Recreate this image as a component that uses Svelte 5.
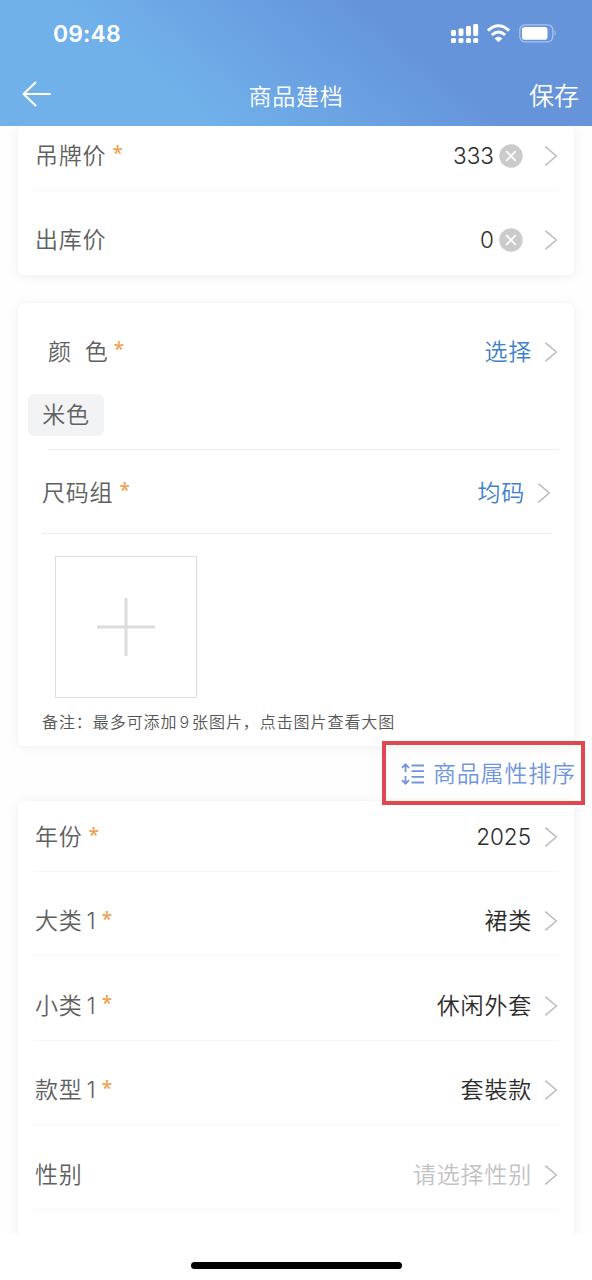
<script lang="ts">
  type Row = {
    label: string;
    index?: string;
    value: string;
    required?: boolean;
    clearable?: boolean;
    placeholder?: boolean;
  };

  const prices: Row[] = [
    { label: '吊牌价', value: '333', required: true, clearable: true },
    { label: '出库价', value: '0', clearable: true },
  ];

  const attributes: Row[] = [
    { label: '年份', value: '2025', required: true },
    { label: '大类', index: '1', value: '裙类', required: true },
    { label: '小类', index: '1', value: '休闲外套', required: true },
    { label: '款型', index: '1', value: '套裝款', required: true },
    { label: '性别', value: '请选择性别', placeholder: true },
  ];
</script>

{#snippet chevron()}
  <svg class="chevron" width="14" height="22" viewBox="0 0 14 22" fill="none">
    <path d="M1.3 1.6L12.3 11L1.3 20.4" stroke="#bcbcbc" stroke-width="1.5"/>
  </svg>
{/snippet}

{#snippet clearIcon()}
  <svg class="clear" width="24" height="24" viewBox="0 0 24 24">
    <circle cx="12" cy="12" r="11.7" fill="#cbcbcb"/>
    <path d="M7.2 7.2L16.8 16.8M16.8 7.2L7.2 16.8" stroke="#fff" stroke-width="1.7"/>
  </svg>
{/snippet}

{#snippet fieldRow(row: Row)}
  <div class="row">
    <span class="label spaced">
      {row.label}{#if row.index}<span class="index">{row.index}</span>{/if}{#if row.required}<i class="star">*</i>{/if}
    </span>
    <span
      class="value"
      class:placeholder={row.placeholder}
      class:clearable={row.clearable}
      class:number={/^\d+$/.test(row.value)}
    >{row.value}</span>
    {#if row.clearable}{@render clearIcon()}{/if}
    {@render chevron()}
  </div>
{/snippet}

<div class="screen">
  <header>
    <div class="status">
      <span class="time">09:48</span>
      <svg width="108" height="24" viewBox="0 0 108 24" fill="#fff">
        <rect x="1" y="8" width="5" height="6" rx="1.4"/>
        <rect x="8.5" y="6.5" width="5" height="7.5" rx="1.4"/>
        <rect x="16" y="4" width="5" height="10" rx="1.4"/>
        <rect x="23.2" y="2" width="5" height="12" rx="1.4"/>
        <rect x="1" y="16" width="5" height="5" rx="1.6"/>
        <rect x="8.5" y="16" width="5" height="5" rx="1.6"/>
        <rect x="16" y="16" width="5" height="5" rx="1.6"/>
        <rect x="23.2" y="16" width="5" height="5" rx="1.6"/>
        <g fill="none" stroke="#fff" stroke-width="3">
          <path d="M38 8.6Q48.5 -1 59 8.6"/>
          <path d="M41.8 13Q48.5 7 55.2 13"/>
        </g>
        <path d="M44.6 16.4Q48.5 13 52.4 16.4L48.5 20.2Z"/>
        <rect x="69.8" y="2.8" width="33" height="17" rx="5" fill="none" stroke="#fff" stroke-opacity=".45" stroke-width="1.3"/>
        <rect x="72" y="5" width="25.5" height="12.7" rx="2.8"/>
        <path d="M104.6 8.5Q107 11.2 104.6 14Z" fill-opacity=".5"/>
      </svg>
    </div>
    <div class="nav">
      <svg class="back" width="30" height="28" viewBox="0 0 30 28" fill="none" stroke="#fff" stroke-width="2" stroke-linecap="round" stroke-linejoin="round">
        <path d="M13.5 2.5L1.5 14L13.5 25.5M1.5 14H28"/>
      </svg>
      <span class="title">商品建档</span>
      <span class="save">保存</span>
    </div>
  </header>

  <main>
    <section class="card prices">
      {#each prices as row}
        {@render fieldRow(row)}
      {/each}
    </section>

    <section class="card sku">
      <div class="color-block">
        <div class="row">
          <span class="label">颜<span class="gap"></span>色<i class="star">*</i></span>
          <span class="value link">选择</span>
          {@render chevron()}
        </div>
        <span class="tag">米色</span>
      </div>
      <div class="row size">
        <span class="label spaced">尺码组<i class="star">*</i></span>
        <span class="value link">均码</span>
        {@render chevron()}
      </div>
      <div class="photos">
        <div class="add">
          <svg width="58" height="58" viewBox="0 0 58 58" stroke="#dcdcdc" stroke-width="3">
            <path d="M29 0V58M0 29H58"/>
          </svg>
        </div>
        <p class="note">备注：最多可添加<span class="count">9</span>张图片，点击图片查看大图</p>
      </div>
    </section>

    <div class="sort">
      <svg width="24" height="22" viewBox="0 0 24 22" fill="none" stroke="#7094e0" stroke-width="1.8">
        <path d="M1 4.8L4.5 1.3L8 4.8M4.5 1.5V9M1 17.2L4.5 20.7L8 17.2M4.5 20.5V13"/>
        <path d="M10.5 2.5H23M10.5 8.2H23M10.5 13.8H23M10.5 19.5H23"/>
      </svg>
      <span>商品属性排序</span>
    </div>

    <section class="card attributes">
      {#each attributes as row}
        {@render fieldRow(row)}
      {/each}
    </section>
  </main>

  <footer><div class="home-bar"></div></footer>
</div>

<style>
  :global(body) {
    margin: 0;
    background: #fff;
  }

  .screen {
    display: flex;
    flex-direction: column;
    width: 592px;
    height: 1280px;
    overflow: hidden;
    background: #fefefe;
    font-family: Inter, "Noto Sans CJK SC", sans-serif;
    font-size: 23px;
    font-weight: 350;
    line-height: 34px;
    letter-spacing: 0.8px;
    color: #333;
  }

  header {
    flex: none;
    box-sizing: border-box;
    height: 126px;
    color: #fff;
    background: linear-gradient(40deg, #70b1ea 29%, #6694db 68%);
  }

  .status {
    display: flex;
    align-items: center;
    justify-content: space-between;
    height: 67px;
    padding: 0 34px 0 53px;
  }

  .time {
    font-size: 23px;
    font-weight: 600;
    letter-spacing: 0.1px;
  }

  .nav {
    display: grid;
    grid-template-columns: 1fr auto 1fr;
    align-items: center;
    height: 58px;
    padding: 0 13px 0 22px;
  }

  .back { margin-top: -4px; }
  .title { margin: 1px 9px 0 0; }

  .save {
    justify-self: end;
    font-size: 25px;
    letter-spacing: 0;
  }

  main {
    display: flex;
    flex-direction: column;
    flex: none;
    height: 1107px;
    overflow: hidden;
  }

  .card {
    flex: none;
    margin: 0 18px;
    border-radius: 6px;
    background: #fff;
    box-shadow: 0 1px 12px rgba(0, 0, 0, 0.07);
  }

  .row {
    display: flex;
    align-items: center;
    box-sizing: border-box;
    height: 84.5px;
    margin: 0 15px;
    padding: 16px 1px 0 2px;
    border-bottom: 1px solid #f7f7f7;
  }

  .label {
    display: flex;
    align-items: center;
    flex: 1;
    color: #606060;
  }

  .index {
    margin-left: 4px;
    letter-spacing: 0;
  }

  .star {
    margin: 0 0 5px 5px;
    color: #f0a050;
    font-family: "Noto Sans", sans-serif;
    font-size: 19px;
    font-style: normal;
    font-weight: 500;
    letter-spacing: 0;
  }

  .spaced .star { margin-left: 6px; }

  .value {
    margin-right: 12px;
    color: #2c2c2c;
  }

  .value.number { margin-right: 13px; font-size: 22.5px; letter-spacing: 0; }
  .value.clearable { margin-right: 5px; }
  .value.placeholder { color: #c2c2c4; }
  .value.link { color: #3e80cc; }
  .clear { margin-right: 21px; }

  .prices { height: 149px; }
  .prices .row:first-child { height: 65px; padding-top: 0; padding-bottom: 5px; }
  .prices .row:last-child { padding-top: 13px; border-bottom: none; }

  .sku {
    height: 443px;
    margin-top: 28px;
  }

  .color-block {
    box-sizing: border-box;
    height: 147px;
    padding-top: 8px;
  }

  .color-block .row {
    height: 83px;
    padding: 0 1px 2px 15px;
    border: none;
  }

  .gap { width: 13px; }

  .tag {
    display: block;
    width: 76px;
    height: 42px;
    margin-left: 10px;
    border-radius: 6px;
    background: #f2f3f5;
    color: #606060;
    line-height: 42px;
    text-align: center;
  }

  .row.size {
    height: 84px;
    margin: 0 23px 0 24px;
    padding: 2px 0 0;
    border-bottom-color: #eee;
  }

  .color-block::after {
    content: '';
    display: block;
    height: 1px;
    margin: 13px 15px 0 30px;
    background: #ebebeb;
  }

  .photos { padding: 22px 0 0 24px; }

  .add {
    display: flex;
    align-items: center;
    justify-content: center;
    box-sizing: border-box;
    width: 142px;
    height: 142px;
    margin-left: 13px;
    border: 1.5px solid #dcdcdc;
  }

  .note {
    margin: 12px 0 0;
    color: #555;
    font-size: 16px;
    line-height: 24px;
    letter-spacing: 0.93px;
  }

  .count { margin: 0 2px; }

  .sort {
    display: flex;
    align-items: center;
    align-self: flex-end;
    gap: 8px;
    flex: none;
    box-sizing: border-box;
    width: 203px;
    height: 64px;
    margin: -5px 7px -4px 0;
    padding: 2px 0 0 15px;
    border: 4px solid #e0474f;
    color: #7094e0;
    white-space: nowrap;
    z-index: 1;
  }

  .attributes { height: 500px; }
  .attributes .row:first-child { height: 70.5px; padding-top: 3px; }

  footer {
    display: flex;
    justify-content: center;
    flex: 1;
    background: #fff;
  }

  .home-bar {
    width: 211px;
    height: 7px;
    margin-top: 29px;
    border-radius: 4px;
    background: #000;
  }
</style>
